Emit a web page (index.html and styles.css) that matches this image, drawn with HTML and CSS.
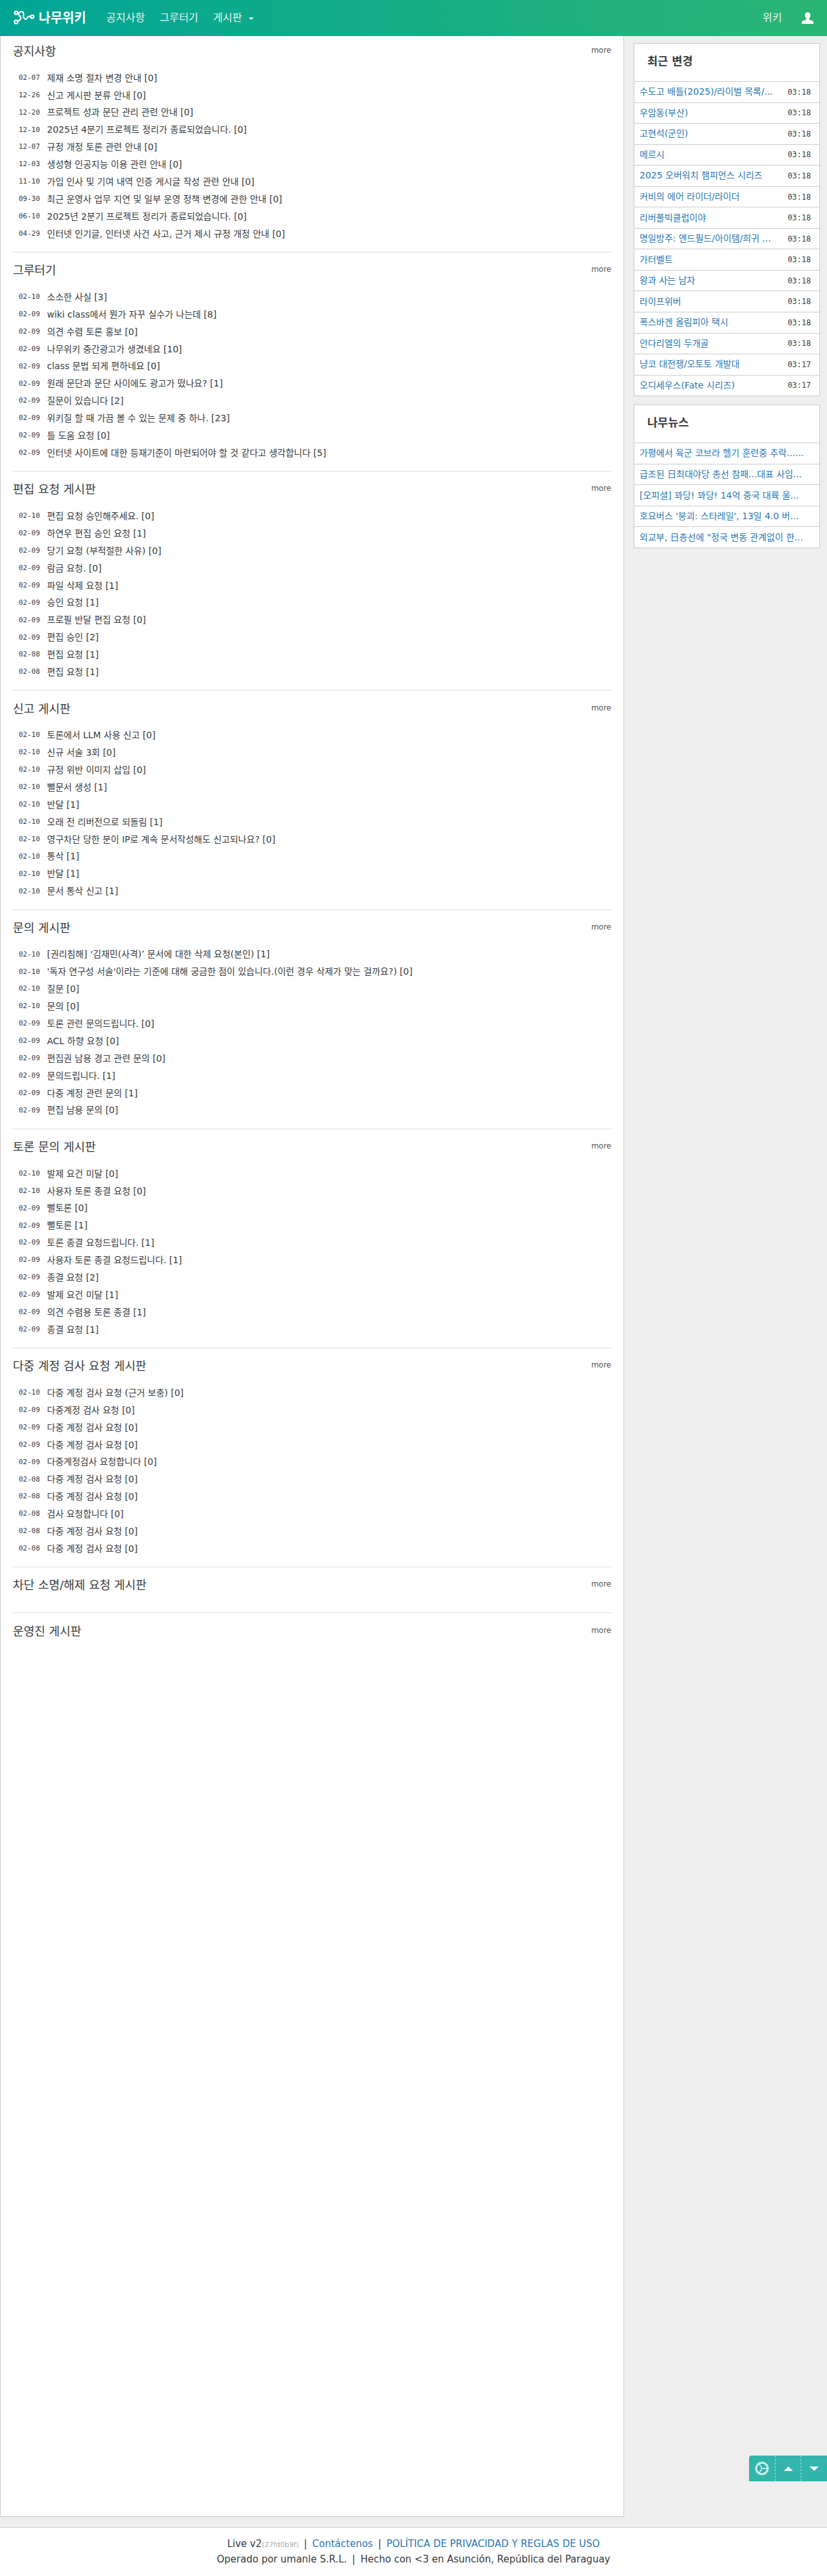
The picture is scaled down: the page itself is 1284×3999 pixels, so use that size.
FILE: index.html
```html
<!DOCTYPE html>
<html lang="ko">
<head>
<meta charset="utf-8">
<title>나무위키</title>
<link rel="stylesheet" href="styles.css">
</head>
<body>
<nav class="nav">
  <a class="logo" href="#">
    <svg class="logo-mark" width="34" height="26" viewBox="0 0 34 26" fill="none" stroke="#fff" stroke-width="2.2" stroke-linecap="round">
      <circle cx="4" cy="5" r="2.4"/><circle cx="4" cy="19" r="2.6"/><circle cx="29" cy="11" r="2.4"/>
      <path d="M6 18c4-1 6-3 5-6S7 9 8 6s5-4 7-2-1 7 1 9 3 3 5 0 3-3 6-2"/>
    </svg>
    <span class="logo-text">나무위키</span>
  </a>
  <a class="nav-link" href="#">공지사항</a>
  <a class="nav-link" href="#">그루터기</a>
  <a class="nav-link" href="#">게시판<i class="caret"></i></a>
  <a class="nav-link nav-wiki" href="#">위키</a>
  <a class="nav-user" href="#" aria-label="user">
    <svg width="18" height="18" viewBox="0 0 18 18" fill="#fff"><path d="M9 0c2.700 0 4.300 2 4.300 4.700 0 2.200-1 4.200-2.300 5.100v1.400c2.600.8 6 1.900 7 3.400V18H0v-3.400c1-1.500 4.400-2.600 7-3.400V9.800C5.700 8.900 4.700 6.900 4.700 4.700 4.700 2 6.300 0 9 0z"/></svg>
  </a>
</nav>

<div class="layout">
  <main class="main">
    <section class="board board-first">
      <div class="board-head"><h2>공지사항</h2><a class="more" href="#">more</a></div>
      <ul class="rows">
        <li><time>02-07</time><a href="#">제재 소명 절차 변경 안내 [0]</a></li>
        <li><time>12-26</time><a href="#">신고 게시판 분류 안내 [0]</a></li>
        <li><time>12-20</time><a href="#">프로젝트 성과 문단 관리 관련 안내 [0]</a></li>
        <li><time>12-10</time><a href="#">2025년 4분기 프로젝트 정리가 종료되었습니다. [0]</a></li>
        <li><time>12-07</time><a href="#">규정 개정 토론 관련 안내 [0]</a></li>
        <li><time>12-03</time><a href="#">생성형 인공지능 이용 관련 안내 [0]</a></li>
        <li><time>11-10</time><a href="#">가입 인사 및 기여 내역 인증 게시글 작성 관련 안내 [0]</a></li>
        <li><time>09-30</time><a href="#">최근 운영사 업무 지연 및 일부 운영 정책 변경에 관한 안내 [0]</a></li>
        <li><time>06-10</time><a href="#">2025년 2분기 프로젝트 정리가 종료되었습니다. [0]</a></li>
        <li><time>04-29</time><a href="#">인터넷 인기글, 인터넷 사건 사고, 근거 제시 규정 개정 안내 [0]</a></li>
      </ul>
    </section>

    <section class="board">
      <div class="board-head"><h2>그루터기</h2><a class="more" href="#">more</a></div>
      <ul class="rows">
        <li><time>02-10</time><a href="#">소소한 사실 [3]</a></li>
        <li><time>02-09</time><a href="#">wiki class에서 뭔가 자꾸 실수가 나는데 [8]</a></li>
        <li><time>02-09</time><a href="#">의견 수렴 토론 홍보 [0]</a></li>
        <li><time>02-09</time><a href="#">나무위키 중간광고가 생겼네요 [10]</a></li>
        <li><time>02-09</time><a href="#">class 문법 되게 편하네요 [0]</a></li>
        <li><time>02-09</time><a href="#">원래 문단과 문단 사이에도 광고가 떴나요? [1]</a></li>
        <li><time>02-09</time><a href="#">질문이 있습니다 [2]</a></li>
        <li><time>02-09</time><a href="#">위키질 할 때 가끔 볼 수 있는 문제 중 하나. [23]</a></li>
        <li><time>02-09</time><a href="#">틀 도움 요청 [0]</a></li>
        <li><time>02-09</time><a href="#">인터넷 사이트에 대한 등재기준이 마련되어야 할 것 같다고 생각합니다 [5]</a></li>
      </ul>
    </section>

    <section class="board">
      <div class="board-head"><h2>편집 요청 게시판</h2><a class="more" href="#">more</a></div>
      <ul class="rows">
        <li><time>02-10</time><a href="#">편집 요청 승인해주세요. [0]</a></li>
        <li><time>02-09</time><a href="#">하연우 편집 승인 요청 [1]</a></li>
        <li><time>02-09</time><a href="#">당기 요청 (부적절한 사유) [0]</a></li>
        <li><time>02-09</time><a href="#">람금 요청. [0]</a></li>
        <li><time>02-09</time><a href="#">파일 삭제 요청 [1]</a></li>
        <li><time>02-09</time><a href="#">승인 요청 [1]</a></li>
        <li><time>02-09</time><a href="#">프로필 반달 편집 요청 [0]</a></li>
        <li><time>02-09</time><a href="#">편집 승인 [2]</a></li>
        <li><time>02-08</time><a href="#">편집 요청 [1]</a></li>
        <li><time>02-08</time><a href="#">편집 요청 [1]</a></li>
      </ul>
    </section>

    <section class="board">
      <div class="board-head"><h2>신고 게시판</h2><a class="more" href="#">more</a></div>
      <ul class="rows">
        <li><time>02-10</time><a href="#">토론에서 LLM 사용 신고 [0]</a></li>
        <li><time>02-10</time><a href="#">신규 서술 3회 [0]</a></li>
        <li><time>02-10</time><a href="#">규정 위반 이미지 삽입 [0]</a></li>
        <li><time>02-10</time><a href="#">뻘문서 생성 [1]</a></li>
        <li><time>02-10</time><a href="#">반달 [1]</a></li>
        <li><time>02-10</time><a href="#">오래 전 리버전으로 되돌림 [1]</a></li>
        <li><time>02-10</time><a href="#">영구차단 당한 분이 IP로 계속 문서작성해도 신고되나요? [0]</a></li>
        <li><time>02-10</time><a href="#">통삭 [1]</a></li>
        <li><time>02-10</time><a href="#">반달 [1]</a></li>
        <li><time>02-10</time><a href="#">문서 통삭 신고 [1]</a></li>
      </ul>
    </section>

    <section class="board">
      <div class="board-head"><h2>문의 게시판</h2><a class="more" href="#">more</a></div>
      <ul class="rows">
        <li><time>02-10</time><a href="#">[권리침해] ‘김재민(사격)’ 문서에 대한 삭제 요청(본인) [1]</a></li>
        <li><time>02-10</time><a href="#">'독자 연구성 서술'이라는 기준에 대해 궁금한 점이 있습니다.(이런 경우 삭제가 맞는 걸까요?) [0]</a></li>
        <li><time>02-10</time><a href="#">질문 [0]</a></li>
        <li><time>02-10</time><a href="#">문의 [0]</a></li>
        <li><time>02-09</time><a href="#">토론 관련 문의드립니다. [0]</a></li>
        <li><time>02-09</time><a href="#">ACL 하향 요청 [0]</a></li>
        <li><time>02-09</time><a href="#">편집권 남용 경고 관련 문의 [0]</a></li>
        <li><time>02-09</time><a href="#">문의드립니다. [1]</a></li>
        <li><time>02-09</time><a href="#">다중 계정 관련 문의 [1]</a></li>
        <li><time>02-09</time><a href="#">편집 남용 문의 [0]</a></li>
      </ul>
    </section>

    <section class="board">
      <div class="board-head"><h2>토론 문의 게시판</h2><a class="more" href="#">more</a></div>
      <ul class="rows">
        <li><time>02-10</time><a href="#">발제 요건 미달 [0]</a></li>
        <li><time>02-10</time><a href="#">사용자 토론 종결 요청 [0]</a></li>
        <li><time>02-09</time><a href="#">뻘토론 [0]</a></li>
        <li><time>02-09</time><a href="#">뻘토론 [1]</a></li>
        <li><time>02-09</time><a href="#">토론 종결 요청드립니다. [1]</a></li>
        <li><time>02-09</time><a href="#">사용자 토론 종결 요청드립니다. [1]</a></li>
        <li><time>02-09</time><a href="#">종결 요청 [2]</a></li>
        <li><time>02-09</time><a href="#">발제 요건 미달 [1]</a></li>
        <li><time>02-09</time><a href="#">의견 수렴용 토론 종결 [1]</a></li>
        <li><time>02-09</time><a href="#">종결 요청 [1]</a></li>
      </ul>
    </section>

    <section class="board">
      <div class="board-head"><h2>다중 계정 검사 요청 게시판</h2><a class="more" href="#">more</a></div>
      <ul class="rows">
        <li><time>02-10</time><a href="#">다중 계정 검사 요청 (근거 보충) [0]</a></li>
        <li><time>02-09</time><a href="#">다중계정 검사 요청 [0]</a></li>
        <li><time>02-09</time><a href="#">다중 계정 검사 요청 [0]</a></li>
        <li><time>02-09</time><a href="#">다중 계정 검사 요청 [0]</a></li>
        <li><time>02-09</time><a href="#">다중계정검사 요청합니다 [0]</a></li>
        <li><time>02-08</time><a href="#">다중 계정 검사 요청 [0]</a></li>
        <li><time>02-08</time><a href="#">다중 계정 검사 요청 [0]</a></li>
        <li><time>02-08</time><a href="#">검사 요청합니다 [0]</a></li>
        <li><time>02-08</time><a href="#">다중 계정 검사 요청 [0]</a></li>
        <li><time>02-08</time><a href="#">다중 계정 검사 요청 [0]</a></li>
      </ul>
    </section>

    <section class="board">
      <div class="board-head"><h2>차단 소명/해제 요청 게시판</h2><a class="more" href="#">more</a></div>
    </section>

    <section class="board board-last">
      <div class="board-head"><h2>운영진 게시판</h2><a class="more" href="#">more</a></div>
    </section>
  </main>

  <aside class="aside">
    <div class="card">
      <h3 class="card-title">최근 변경</h3>
      <ul class="card-list">
        <li><a href="#">수도고 배틀(2025)/라이벌 목록/...</a><time>03:18</time></li>
        <li><a href="#">우암동(부산)</a><time>03:18</time></li>
        <li><a href="#">고현석(군인)</a><time>03:18</time></li>
        <li><a href="#">메르시</a><time>03:18</time></li>
        <li><a href="#">2025 오버워치 챔피언스 시리즈</a><time>03:18</time></li>
        <li><a href="#">커비의 에어 라이더/라이더</a><time>03:18</time></li>
        <li><a href="#">리버풀빅클럽이야</a><time>03:18</time></li>
        <li><a href="#">명일방주: 엔드필드/아이템/희귀 ...</a><time>03:18</time></li>
        <li><a href="#">가터벨트</a><time>03:18</time></li>
        <li><a href="#">왕과 사는 남자</a><time>03:18</time></li>
        <li><a href="#">라이프위버</a><time>03:18</time></li>
        <li><a href="#">폭스바겐 올림피아 택시</a><time>03:18</time></li>
        <li><a href="#">안다리엘의 두개골</a><time>03:18</time></li>
        <li><a href="#">냥코 대전쟁/오토토 개발대</a><time>03:17</time></li>
        <li><a href="#">오디세우스(Fate 시리즈)</a><time>03:17</time></li>
      </ul>
    </div>
    <div class="card">
      <h3 class="card-title">나무뉴스</h3>
      <ul class="card-list">
        <li><a href="#">가평에서 육군 코브라 헬기 훈련중 추락......</a></li>
        <li><a href="#">급조된 日최대야당 총선 참패...대표 사임...</a></li>
        <li><a href="#">[오피셜] 꽈당! 꽈당! 14억 중국 대륙 울...</a></li>
        <li><a href="#">호요버스 '붕괴: 스타레일', 13일 4.0 버...</a></li>
        <li><a href="#">외교부, 日총선에 "정국 변동 관계없이 한...</a></li>
      </ul>
    </div>
  </aside>
</div>

<div class="float-btns">
  <a href="#" aria-label="settings">
    <svg width="22" height="22" viewBox="0 0 22 22" fill="none" stroke="#e8fbf8"><circle cx="11" cy="11" r="8.500" stroke-width="1.800"/><circle cx="11" cy="11" r="10" stroke-width="1.800" stroke-dasharray="1.800 1.700"/><path d="M11 11 6.800 3.800M11 11H19.500M11 11 6.800 18.200" stroke-width="1.300"/></svg>
  </a>
  <a href="#" aria-label="up"><i class="tri-up"></i></a>
  <a href="#" aria-label="down"><i class="tri-down"></i></a>
</div>

<footer class="footer">
  <p>Live v2<small>(27fd0b9f)</small><span class="sep">|</span><a href="#">Contáctenos</a><span class="sep">|</span><a href="#">POLÍTICA DE PRIVACIDAD Y REGLAS DE USO</a></p>
  <p>Operado por umanle S.R.L.<span class="sep">|</span>Hecho con &lt;3 en Asunción, República del Paraguay</p>
</footer>
</body>
</html>
```

FILE: styles.css
```css
* { box-sizing: border-box; }

html, body { margin: 0; padding: 0; }

body {
  background: #eee;
  color: #373a3c;
  font-family: "DejaVu Sans", "Noto Sans CJK KR", sans-serif;
  font-size: 14px;
  line-height: 1.5;
}

a { color: inherit; text-decoration: none; }

ul { list-style: none; margin: 0; padding: 0; }

time { font-family: "DejaVu Sans Mono", monospace; }

/* top bar */
.nav {
  display: flex;
  align-items: center;
  height: 56px;
  padding-left: 21px;
  padding-right: 21px;
  background: linear-gradient(90deg, #00a596, #2bb574);
  color: #fff;
}

.logo { display: flex; align-items: center; width: 144px; }
.logo-mark { flex: none; }
.logo-text {
  margin-left: 5px;
  font-size: 20px;
  font-weight: 700;
  line-height: 24px;
  white-space: nowrap;
}

.nav-link {
  margin-right: 23px;
  color: #e6f6f3;
  font-size: 16.300px;
  line-height: 24px;
  white-space: nowrap;
}

.caret {
  display: inline-block;
  margin-left: 10px;
  vertical-align: middle;
  border-top: 4.500px solid #e6f6f3;
  border-left: 4.500px solid transparent;
  border-right: 4.500px solid transparent;
}

.nav-wiki { margin-left: auto; margin-right: 31px; }
.nav-user { display: block; height: 18px; line-height: 0; }

/* page columns */
.layout {
  display: flex;
  align-items: flex-start;
}

.main {
  flex: none;
  width: 969px;
  min-height: 3851px;
  padding: 0 19px 0 19px;
  background: #fff;
  border-left: 1px solid #ccc;
  border-right: 1px solid #ccc;
  border-bottom: 1px solid #ccc;
}

.board {
  padding-bottom: 14.300px;
  border-bottom: 1px solid #ddd;
}

.board-last { border-bottom: 0; }

.board-head {
  display: flex;
  justify-content: space-between;
  align-items: flex-start;
  height: 56px;
  padding-top: 4.300px;
}

.board-first .board-head { height: 51.700px; padding-top: 0; }

.board-head h2 {
  margin: 0;
  font-size: 18.200px;
  font-weight: 400;
  line-height: 48px;
}

.more {
  margin-top: 14px;
  color: #555;
  font-size: 12px;
  line-height: 16px;
}

.rows li {
  display: flex;
  align-items: center;
  height: 26.900px;
  padding-left: 9px;
  white-space: nowrap;
}

.rows time {
  flex: none;
  width: 44px;
  font-size: 11px;
}

/* sidebar */
.aside {
  flex: none;
  width: 289px;
  margin-top: 11px;
  margin-left: 15px;
}

.card {
  margin-bottom: 13px;
  background: #fff;
  border: 1px solid #ccc;
}

.card-title {
  height: 58px;
  margin: 0;
  padding-left: 20px;
  font-size: 17.500px;
  font-weight: 700;
  line-height: 54px;
}

.card-list li {
  display: flex;
  justify-content: space-between;
  align-items: center;
  height: 32.550px;
  padding: 0 5px 0 8px;
  border-top: 1px solid #ccc;
}

.card-list a {
  color: #2a77b5;
  white-space: nowrap;
}

.card-list time {
  flex: none;
  margin-left: 9px;
  margin-right: 8px;
  font-size: 12px;
}

/* floating scroll buttons */
.float-btns {
  position: fixed;
  right: 0;
  bottom: 147px;
  display: flex;
  width: 121px;
  height: 40px;
  background: #33b5ab;
  border-top-left-radius: 4px;
}

.float-btns a {
  display: flex;
  flex: 1;
  align-items: center;
  justify-content: center;
  border-left: 1px dashed #a6e8e0;
}

.float-btns a:first-child { border-left: 0; }

.tri-up, .tri-down {
  display: block;
  border-left: 7px solid transparent;
  border-right: 7px solid transparent;
}
.tri-up { border-bottom: 7px solid #fff; }
.tri-down { border-top: 7px solid #fff; }

/* footer */
.footer {
  height: 76px;
  margin-top: 16px;
  padding-top: 14px;
  background: #fff;
  border-top: 1px solid #ccc;
  font-size: 15px;
  text-align: center;
}

.footer p { margin: 0; line-height: 23px; }
.footer a { color: #2a77b5; }
.footer small { color: #aaa; font-size: 10.800px; }
.sep { margin: 0 8px; }
```
